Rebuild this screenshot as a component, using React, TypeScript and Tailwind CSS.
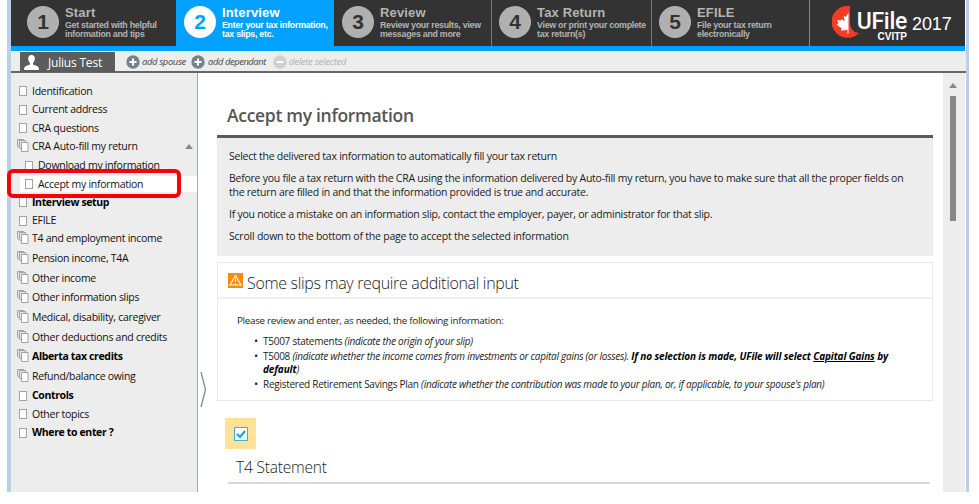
import React from "react";

type Step = { n: string; title: string; lines: [string, string]; box: string };

const steps: Step[] = [
  { n: "1", title: "Start", lines: ["Get started with helpful", "information and tips"], box: "w-[165px] pl-4" },
  { n: "2", title: "Interview", lines: ["Enter your tax information,", "tax slips, etc."], box: "w-[158px] pl-2" },
  { n: "3", title: "Review", lines: ["Review your results, view", "messages and more"], box: "w-[157px] pl-2" },
  { n: "4", title: "Tax Return", lines: ["View or print your complete", "tax return(s)"], box: "w-[160px] pl-[7px] border-l border-[#777]" },
  { n: "5", title: "EFILE", lines: ["File your tax return", "electronically"], box: "w-[158px] pl-[7px] border-l border-[#777]" },
];

function StepCell({ step }: { step: Step }) {
  const active = step.n === "2";
  return (
    <div className={`flex shrink-0 ${step.box} ${active ? "h-[51px] bg-[#02a0ff] text-white" : "h-[46px] bg-[#333] text-[#b4b4b4]"}`}>
      <div className={`mt-[6px] flex h-8 w-8 shrink-0 items-center justify-center rounded-full text-[21px] font-bold ${active ? "bg-white text-[#02a0ff]" : "bg-[#b0b0b0] text-[#333]"}`}>
        {step.n}
      </div>
      <div className="ml-[6px] pt-[5px] font-bold whitespace-nowrap">
        <div className="text-[13px] leading-[16px] tracking-[0.15px]">{step.title}</div>
        <div className="text-[8.8px] leading-[9px] tracking-[-0.25px]">{step.lines[0]}<br />{step.lines[1]}</div>
      </div>
    </div>
  );
}

function Logo() {
  return (
    <div className="flex h-[46px] w-[156px] shrink-0 border-l border-[#888] bg-[#333] pl-[22px] text-white">
      <svg className="mt-[6px] h-8 w-7 shrink-0" viewBox="0 0 28 32">
        <path d="M18 0A16 16 0 1 0 27 27Q19.500 26.500 18 18Z" fill="#f23c28" />
        <path d="M16.500 6.500l-2.700 4.500-2-1.200.8 5.700-3-2.500-.6 1.500-4-.5 1.400 3.500-1.900.9 5.200 4-.7 2.300 6.500-.9v3.700h1z" fill="#fff" />
      </svg>
      <div className="-ml-[4px] w-[51px] pt-[11px] text-right">
        <div className="font-['Roboto',sans-serif] text-[23px] leading-[21px] font-medium tracking-[-0.3px]">UFile</div>
        <div className="text-[10px] leading-[10px] font-bold">CVITP</div>
      </div>
      <div className="ml-[5px] pt-[14px] text-[18px] leading-[20px] tracking-[-0.1px]">2017</div>
    </div>
  );
}

type Item = { label: string; h: string; stack?: boolean; bold?: boolean; child?: boolean; on?: boolean };
const items: Item[] = [
  { label: "Identification", h: "h-[18px]" },
  { label: "Current address", h: "h-[19px]" },
  { label: "CRA questions", h: "h-[18px]" },
  { label: "CRA Auto-fill my return", h: "h-[18px]", stack: true },
  { label: "Download my information", h: "h-[21px]", child: true },
  { label: "Accept my information", h: "h-[16px]", child: true, on: true },
  { label: "Interview setup", h: "h-[20px]", bold: true },
  { label: "EFILE", h: "h-[17px]" },
  { label: "T4 and employment income", h: "h-[19px]", stack: true },
  { label: "Pension income, T4A", h: "h-[20px]", stack: true },
  { label: "Other income", h: "h-[20px]", stack: true },
  { label: "Other information slips", h: "h-[19px]", stack: true },
  { label: "Medical, disability, caregiver", h: "h-[20px]", stack: true },
  { label: "Other deductions and credits", h: "h-[20px]", stack: true },
  { label: "Alberta tax credits", h: "h-[19px]", stack: true, bold: true },
  { label: "Refund/balance owing", h: "h-[20px]", stack: true },
  { label: "Controls", h: "h-[19px]", bold: true },
  { label: "Other topics", h: "h-[18px]" },
  { label: "Where to enter ?", h: "h-[19px]", bold: true },
];

function PageIcon({ stack }: { stack?: boolean }) {
  return stack ? (
    <svg className="-mt-[2px] h-[13px] w-3 shrink-0" viewBox="0 0 12 13" fill="#e6e6e6" stroke="#9a9a9a" strokeWidth="0.9">
      <path d="M.5.5h6v8.500h-4l-2-2z" />
      <path d="M2.500 1.500h6v9h-4l-2-2z" />
      <path d="M4.500 3.500h6.500v9h-6.500z" fill="#fff" />
    </svg>
  ) : (
    <div className="ml-[2px] h-[10px] w-2 shrink-0 border border-[#a3a3a3] bg-white" />
  );
}

function Sidebar() {
  return (
    <aside className="w-[187px] shrink-0 border-r border-[#a3a9b0] bg-[#ededed] pt-[9px]">
      {items.map((it) => (
        <div key={it.label} className={`flex items-center ${it.h} ${it.child ? "ml-[9px] pl-[3px]" : "pl-[6px]"} ${it.on ? "bg-white" : ""}`}>
          <div className="w-[15px]"><PageIcon stack={it.stack} /></div>
          <span className={`pt-px whitespace-nowrap text-[10.5px] ${it.bold ? "font-bold tracking-[-0.36px] text-black" : "tracking-[-0.28px] text-[#111]"}`}>{it.label}</span>
          {it.label.startsWith("CRA Auto") && (
            <svg className="mr-[4px] ml-auto h-[5px] w-2" viewBox="0 0 8 5"><path d="M0 5L4 0l4 5z" fill="#888" /></svg>
          )}
        </div>
      ))}
    </aside>
  );
}

function Round({ minus }: { minus?: boolean }) {
  return (
    <svg className="h-[14px] w-[14px] shrink-0" viewBox="0 0 14 14">
      <circle cx="7" cy="7" r="6.700" fill={minus ? "#cfcfcf" : "#75818d"} />
      <path d={minus ? "M3.500 7h7" : "M3.500 7h7M7 3.500v7"} stroke="#fff" strokeWidth="2" />
    </svg>
  );
}

function PersonBar() {
  return (
    <div className="flex h-[22px] border-b-2 border-[#666] bg-[#ededed]">
      <div className="mt-px ml-[9px] flex h-[20px] w-[95px] items-center bg-[#5c5c5c] text-white">
        <svg className="ml-[4px] h-[15px] w-[15px]" viewBox="0 0 15 15" fill="#fff">
          <path d="M7.500 0C5 0 4 1.700 4.200 4c.1 1.700.8 3.200 1.800 4v1.500L1.500 11.300Q0 12 0 15h15q0-3-1.500-3.700L9 9.500V8c1-.8 1.700-2.300 1.800-4C11 1.700 10 0 7.500 0z" />
        </svg>
        <span className="ml-[9px] pt-[2px] text-[12px] tracking-[-0.2px] whitespace-nowrap">Julius Test</span>
      </div>
      <div className="flex items-center pt-[2px] pl-[11px] text-[9.4px] whitespace-nowrap text-[#444] italic">
        <Round /><span className="mr-[5px] ml-[2px] w-[44px] pt-px tracking-[-0.35px]">add spouse</span>
        <Round /><span className="mr-[7px] ml-[3px] w-[58px] pt-px tracking-[-0.42px]">add dependant</span>
        <Round minus /><span className="ml-[2px] pt-px tracking-[-0.22px] text-[#b0b0b0]">delete selected</span>
      </div>
    </div>
  );
}

const bullet = "before:-ml-[9px] before:inline-block before:w-[9px] before:text-[11px] before:not-italic before:leading-[10px] before:content-['•']";

function Content() {
  return (
    <main className="flex-1 pl-[19px] text-[#1c1c1c]">
      <h1 className="h-[62px] pt-[29px] pl-[10px] text-[17.500px] leading-[26px] font-semibold tracking-[-0.3px] text-[#555]">Accept my information</h1>
      <section className="h-[121px] w-[716px] border-t-[3px] border-[#5c5c5c] bg-[#ededed] pt-[11px] pl-3 text-[10.5px] leading-[14px] tracking-[-0.25px] whitespace-nowrap">
        <p className="mb-[8px]">Select the delivered tax information to automatically fill your tax return</p>
        <p className="mb-[8px]">Before you file a tax return with the CRA using the information delivered by Auto-fill my return, you have to make sure that all the proper fields on<br />the return are filled in and that the information provided is true and accurate.</p>
        <p className="mb-[8px]">If you notice a mistake on an information slip, contact the employer, payer, or administrator for that slip.</p>
        <p className="tracking-[-0.22px]">Scroll down to the bottom of the page to accept the selected information</p>
      </section>
      <section className="mt-[6px] h-[139px] w-[716px] border border-[#e9e9e9]">
        <div className="flex h-[36px] items-center border-b-2 border-[#efefef] pl-[10px]">
          <svg className="h-[15px] w-[15px]" viewBox="0 0 15 15"><path d="M0 0h15v15H0z" fill="#ff8c00" /><path d="M7.500 2.500L13 12H2zM7.500 5.500v3.500M7.500 10v1" fill="none" stroke="#fff" strokeWidth="1.100" /></svg>
          <h2 className="ml-[4px] pt-[5px] text-[16px] font-light tracking-[-0.33px] text-[#222]">Some slips may require additional input</h2>
        </div>
        <div className="pt-[15px] pl-[19px] text-[10px] leading-[14px] whitespace-nowrap">
          <p className="text-[9.8px] tracking-[-0.29px]">Please review and enter, as needed, the following information:</p>
          <ul className="mt-[7px] pl-[26px] leading-[13px] tracking-[-0.26px]">
            <li className={`mb-[2px] ${bullet}`}>T5007 statements <i>(indicate the origin of your slip)</i></li>
            <li className={`mb-[2px] ${bullet}`}>T5008 <i>(indicate whether the income comes from investments or capital gains (or losses). <b className="tracking-[-0.13px] text-black">If no selection is made, UFile will select <u>Capital Gains</u> by<br />default</b>)</i></li>
            <li className={bullet}>Registered Retirement Savings Plan <i>(indicate whether the contribution was made to your plan, or, if applicable, to your spouse's plan)</i></li>
          </ul>
        </div>
      </section>
      <div className="mt-[17px] ml-[8px] flex h-[31px] w-[31px] items-center justify-center bg-[#ffe199]">
        <svg className="h-[14px] w-[14px]" viewBox="0 0 14 14"><path d="M.5.5h13v13H.5z" fill="#fff" stroke="#35b3cc" /><path d="M3 7l3 3 5-6" fill="none" stroke="#119fdc" strokeWidth="2" /></svg>
      </div>
      <h2 className="ml-[11px] h-[35px] w-[702px] border-b-2 border-[#d9d9d9] pt-[6px] pl-[8px] text-[15.500px] leading-[24px] font-light tracking-[-0.2px] text-[#222]">T4 Statement</h2>
    </main>
  );
}

export default function App() {
  return (
    <div className="h-[504px] w-[979px] overflow-hidden bg-white pl-[7px] font-['Open_Sans',sans-serif]">
      <div className="relative flex h-[492px] w-[962px] flex-col border-r-[3px] border-l-4 border-[#b7d0eb]">
        <header className="flex h-[51px] w-[954px] bg-[#02a0ff] font-['Liberation_Sans',sans-serif]">
          {steps.map((s) => <StepCell key={s.n} step={s} />)}
          <Logo />
        </header>
        <PersonBar />
        <div className="flex min-h-0 flex-1">
          <Sidebar />
          <Content />
          <div className="mr-px flex w-[22px] flex-col items-center bg-[#ededed] pt-[10px] pr-[3px]">
            <svg className="h-[5px] w-2" viewBox="0 0 8 5"><path d="M0 5L4 0l4 5z" fill="#888" /></svg>
            <div className="mt-[8px] h-[125px] w-[6px] bg-[#868686]" />
          </div>
        </div>
        <div className="absolute top-[169px] -left-[4px] h-[29px] w-[174px] rounded-[6px] border-4 border-[#fa0006]" />
        <svg className="absolute top-[372px] left-[189px] h-[35px] w-[7px]" viewBox="0 0 7 35"><path d="M1 0L5.500 17.500 1 35" fill="none" stroke="#888" strokeWidth="1.300" /></svg>
      </div>
    </div>
  );
}
